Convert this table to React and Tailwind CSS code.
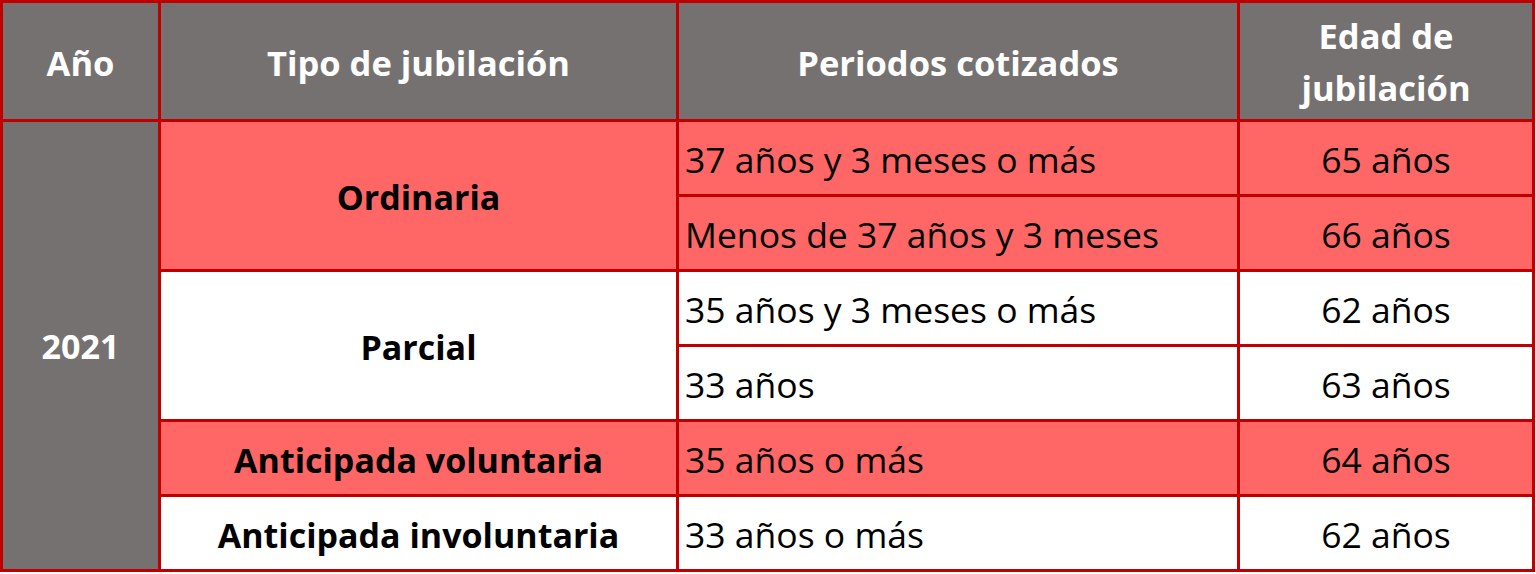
import React from 'react';

const rows = [
  { periodo: '37 años y 3 meses o más', edad: '65 años', red: true },
  { periodo: 'Menos de 37 años y 3 meses', edad: '66 años', red: true },
  { periodo: '35 años y 3 meses o más', edad: '62 años', red: false },
  { periodo: '33 años', edad: '63 años', red: false },
  { periodo: '35 años o más', edad: '64 años', red: true },
  { periodo: '33 años o más', edad: '62 años', red: false },
];

const tipos = [
  { label: 'Ordinaria', start: 2, span: 2, red: true },
  { label: 'Parcial', start: 4, span: 2, red: false },
  { label: 'Anticipada voluntaria', start: 6, span: 1, red: true },
  { label: 'Anticipada involuntaria', start: 7, span: 1, red: false },
];

const rowStart = ['row-start-2', 'row-start-3', 'row-start-4', 'row-start-5', 'row-start-6', 'row-start-7', 'row-start-8'];
const rowSpan = ['', 'row-span-1', 'row-span-2'];

export default function App() {
  return (
    <div
      className="w-[1535px] bg-white"
      style={{ fontFamily: '"Open Sans", "Liberation Sans", sans-serif' }}
    >
      <div className="grid grid-cols-[155px_515px_558px_292px] grid-rows-[116px_repeat(6,72px)] gap-[3px] p-[3px] bg-[#c00000] leading-tight">
        <div className="bg-[#767171] text-white font-bold text-[34.5px] flex items-center justify-center pt-[4px]">Año</div>
        <div className="bg-[#767171] text-white font-bold text-[34.5px] flex items-center justify-center pt-[4px]">Tipo de jubilación</div>
        <div className="bg-[#767171] text-white font-bold text-[34.5px] flex items-center justify-center pt-[4px]">Periodos cotizados</div>
        <div className="bg-[#767171] text-white font-bold text-[34.5px] flex items-center justify-center text-center leading-[52px] pt-[2px]">
          Edad de<br />jubilación
        </div>

        <div className="col-start-1 row-start-2 row-span-6 bg-[#767171] text-white font-bold text-[34px] flex items-center justify-center pt-[2px]">
          2021
        </div>

        {tipos.map((t) => (
          <div
            key={t.label}
            className={`col-start-2 ${rowStart[t.start - 2]} ${rowSpan[t.span]} ${t.red ? 'bg-[#ff6666]' : 'bg-white'} text-black font-bold text-[34px] flex items-center justify-center pt-[4px]`}
          >
            {t.label}
          </div>
        ))}

        {rows.map((r, i) => (
          <React.Fragment key={i}>
            <div className={`col-start-3 ${rowStart[i]} ${r.red ? 'bg-[#ff6666]' : 'bg-white'} text-black text-[35.5px] flex items-center pl-[6px] pt-[2px]`}>
              {r.periodo}
            </div>
            <div className={`col-start-4 ${rowStart[i]} ${r.red ? 'bg-[#ff6666]' : 'bg-white'} text-black text-[35.5px] flex items-center justify-center pt-[2px]`}>
              {r.edad}
            </div>
          </React.Fragment>
        ))}
      </div>
    </div>
  );
}
